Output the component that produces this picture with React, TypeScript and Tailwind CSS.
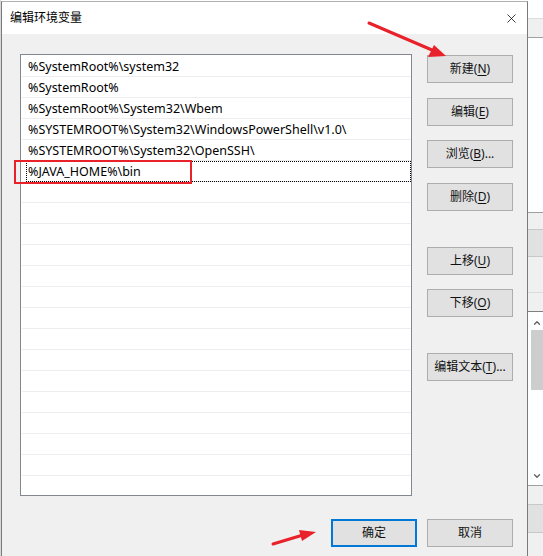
import { X, ChevronUp, ChevronDown } from "lucide-react";

const paths = [
  "%SystemRoot%\\system32",
  "%SystemRoot%",
  "%SystemRoot%\\System32\\Wbem",
  "%SYSTEMROOT%\\System32\\WindowsPowerShell\\v1.0\\",
  "%SYSTEMROOT%\\System32\\OpenSSH\\",
  "%JAVA_HOME%\\bin",
];

function WinButton({ label, hot, tail = "", className = "" }: { label: string; hot: string; tail?: string; className?: string }) {
  return (
    <div
      className={`w-[86px] h-[28px] flex items-center justify-center bg-[#e1e1e1] border border-[#adadad] text-[12px] text-[#111] ${className}`}
    >
      {label}(<span className="underline underline-offset-2">{hot}</span>){tail}
    </div>
  );
}

export default function App() {
  const rows = Array.from({ length: 21 }, (_, i) => paths[i] ?? "");

  return (
    <div className="relative w-[543px] h-[556px] overflow-hidden bg-white flex font-['Noto_Sans','Noto_Sans_CJK_SC',sans-serif]">
      {/* sliver of the window behind, left */}
      <div className="w-[1px] bg-[#d8d8d8]" />

      {/* dialog */}
      <div className="w-[527px] h-full flex flex-col border-l border-r border-t border-[#7a7a7a] border-t-[#b0b0b0] mt-[1px]">
        <div className="h-[32px] bg-white flex items-center justify-between pl-[8px] pr-[8px]">
          <span className="text-[12px] text-black">编辑环境变量</span>
          <X className="h-[15px] w-[15px] text-black" strokeWidth={1.2} />
        </div>

        <div className="flex-1 bg-[#f0f0f0] flex flex-col pt-[20px] pl-[18px] pr-[14px]">
          <div className="flex gap-[15px]">
            {/* list */}
            <div className="w-[392px] h-[442px] bg-white border border-[#828790] pt-[1px] overflow-hidden">
              {rows.map((text, i) => (
                <div
                  key={i}
                  className="relative ml-[1px] h-[21px] border-b border-[#ededed] flex items-center pt-[3px] pl-[6px] text-[12.5px] text-black whitespace-nowrap"
                >
                  {text}
                  {i === 5 && (
                    <div className="absolute left-[4px] right-0 top-0 bottom-[-1px] border border-dotted border-black" />
                  )}
                </div>
              ))}
            </div>

            {/* side buttons */}
            <div className="flex flex-col">
              <WinButton label="新建" hot="N" className="mt-[1px]" />
              <WinButton label="编辑" hot="E" className="mt-[15px]" />
              <WinButton label="浏览" hot="B" tail="..." className="mt-[14px]" />
              <WinButton label="删除" hot="D" className="mt-[15px]" />
              <WinButton label="上移" hot="U" className="mt-[36px]" />
              <WinButton label="下移" hot="O" className="mt-[14px]" />
              <WinButton label="编辑文本" hot="T" tail="..." className="mt-[36px]" />
            </div>
          </div>

          <div className="flex justify-end gap-[10px] mt-[23px]">
            <div className="w-[86px] h-[28px] flex items-center justify-center bg-[#e1e1e1] border-2 border-[#0078d7] text-[12px] text-[#111]">
              确定
            </div>
            <div className="w-[86px] h-[28px] flex items-center justify-center bg-[#e1e1e1] border border-[#adadad] text-[12px] text-[#111]">
              取消
            </div>
          </div>
        </div>
      </div>

      {/* window behind, right */}
      <div className="w-[15px] h-full flex flex-col">
        <div className="h-[19px] bg-white border-b border-[#dcdcdc]" />
        <div className="h-[19px] bg-[#f0f0f0] border-b border-[#a0a0a0]" />
        <div className="h-[175px] bg-white border-b border-[#a0a0a0]" />
        <div className="h-[17px] bg-[#f0f0f0] border-b border-[#c8c8c8]" />
        <div className="h-[27px] bg-[#e1e1e1] border-b border-[#c8c8c8]" />
        <div className="h-[36px] bg-[#f0f0f0] border-b border-[#dcdcdc]" />
        <div className="h-[19px] bg-[#f0f0f0] border-b border-[#808080]" />
        <div className="h-[174px] bg-white border-b border-[#a0a0a0] flex flex-col items-end">
          <ChevronUp className="h-[10px] w-[12px] mt-[6px] text-[#606060]" strokeWidth={3} />
          <div className="w-[12px] h-[60px] mt-[2px] bg-[#cdcdcd]" />
          <div className="flex-1" />
          <ChevronDown className="h-[10px] w-[12px] mb-[4px] text-[#606060]" strokeWidth={3} />
        </div>
        <div className="h-[19px] bg-[#f0f0f0] border-b border-[#c8c8c8]" />
        <div className="h-[28px] bg-[#e1e1e1] border-b border-[#c8c8c8]" />
        <div className="flex-1 bg-[#f0f0f0]" />
      </div>

      {/* red annotation box */}
      <div className="absolute left-[14px] top-[160px] w-[178px] h-[24px] border-2 border-[#e8212b]" />

      {/* red arrows */}
      <svg className="absolute inset-0 pointer-events-none" width="543" height="556">
        <line x1="369" y1="23" x2="432" y2="50" stroke="#e8212b" strokeWidth="3" strokeLinecap="round" />
        <polygon points="446,56 428,57 434,45" fill="#e8212b" />
        <line x1="273" y1="544" x2="303" y2="535" stroke="#e8212b" strokeWidth="3" strokeLinecap="round" />
        <polygon points="316,532 302,541 299,530" fill="#e8212b" />
      </svg>
    </div>
  );
}
